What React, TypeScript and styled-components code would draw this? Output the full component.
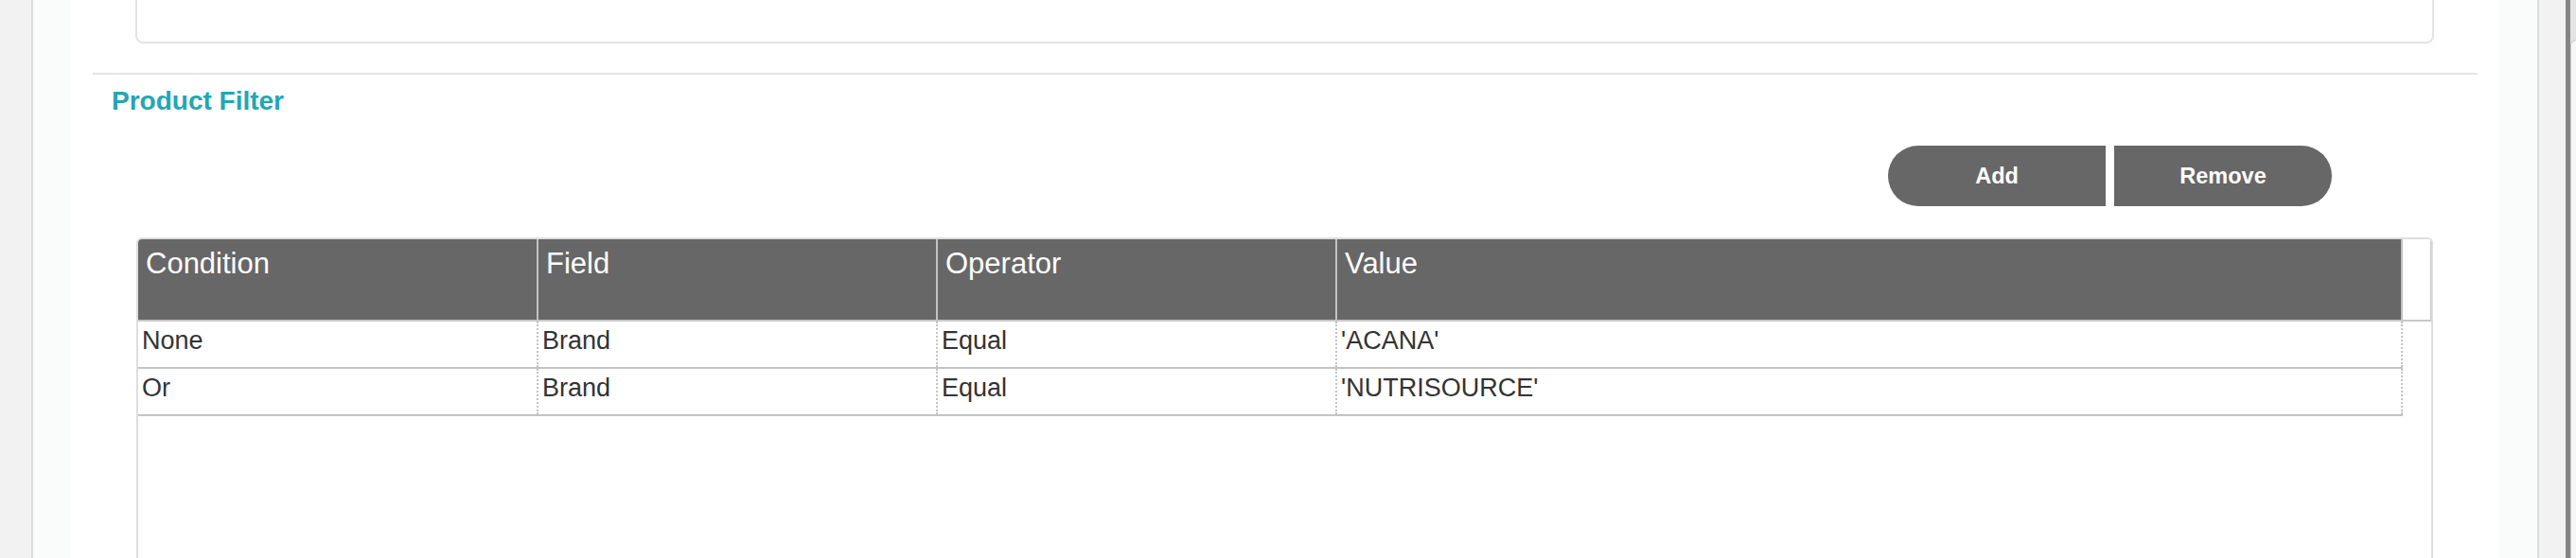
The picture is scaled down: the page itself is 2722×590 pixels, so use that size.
import styled, { createGlobalStyle } from "styled-components";

const GlobalStyle = createGlobalStyle`
  html, body {
    margin: 0;
    padding: 0;
    height: 590px;
    overflow: hidden;
    background: #f2f2f2;
  }
  body {
    font-family: "Liberation Sans", Arial, sans-serif;
  }
  #root {
    height: 590px;
  }
`;

type Filter = {
  condition: string;
  field: string;
  operator: string;
  value: string;
};

const columns = ["Condition", "Field", "Operator", "Value"];

const filters: Filter[] = [
  { condition: "None", field: "Brand", operator: "Equal", value: "'ACANA'" },
  { condition: "Or", field: "Brand", operator: "Equal", value: "'NUTRISOURCE'" },
];

const COLS = "423px 422px 422px 1fr";

const Screen = styled.div`
  display: flex;
  height: 590px;
  overflow: hidden;
`;

const Gutter = styled.div<{ $w: number }>`
  flex: 0 0 ${({ $w }) => $w}px;
  background: #f2f2f2;
`;

const WindowEdge = styled.div`
  flex: 0 0 5px;
  background: #858585;
`;

const NextWindow = styled.div`
  flex: 1;
  background: #e4e4e4;
  display: flex;
  flex-direction: column;
`;

const NextWindowBody = styled.div`
  margin-top: 42px;
  flex: 1;
  background: #f7f7f7;
  border-top-left-radius: 8px;
  border-left: 1px solid #c9c9c9;
  border-top: 1px solid #c9c9c9;
`;

const Page = styled.main`
  flex: 0 0 2650px;
  box-sizing: border-box;
  border-left: 2px solid #dcdcdc;
  border-right: 2px solid #dcdcdc;
  background: linear-gradient(
    to right,
    #fafbfb 0 40px,
    #ffffff 40px calc(100% - 40px),
    #fafbfb calc(100% - 40px)
  );
  display: flex;
  flex-direction: column;
  overflow: hidden;
`;

const PrevCard = styled.div`
  flex: 0 0 46px;
  margin: 0 109px 0 108px;
  box-sizing: border-box;
  border: 2px solid #e4e4e4;
  border-top: none;
  border-radius: 0 0 8px 8px;
  background: #fff;
`;

const Divider = styled.hr`
  margin: 31px 63px 0;
  height: 2px;
  border: none;
  background: #e5e5e5;
  flex: 0 0 2px;
`;

const SectionTitle = styled.h3`
  margin: 12px 0 0 83px;
  font-size: 28px;
  line-height: 32px;
  font-weight: bold;
  color: #22a6b5;
`;

const FilterSection = styled.section`
  padding: 0 110px 0 109px;
  display: flex;
  flex-direction: column;
`;

const ButtonRow = styled.div`
  display: flex;
  justify-content: flex-end;
  gap: 9px;
  margin-top: 31px;
  padding-right: 107px;
`;

const ActionButton = styled.button<{ $side: "left" | "right" }>`
  width: 230px;
  height: 64px;
  border: none;
  background: #676767;
  color: #fff;
  font-family: "Liberation Sans", Arial, sans-serif;
  font-size: 23.5px;
  font-weight: bold;
  cursor: pointer;
  border-radius: ${({ $side }) => ($side === "left" ? "32px 0 0 32px" : "0 32px 32px 0")};
`;

const Grid = styled.div`
  margin-top: 33px;
  height: 420px;
  box-sizing: border-box;
  border: 2px solid #dedede;
  border-bottom: none;
  border-radius: 6px 6px 0 0;
  background: #fff;
  overflow: hidden;
`;

const HeaderRow = styled.div`
  display: grid;
  grid-template-columns: ${COLS} 30px;
`;

const HeaderCell = styled.div`
  height: 87px;
  box-sizing: border-box;
  padding: 8px 8px 0;
  background: #676767;
  color: #fff;
  font-size: 31px;
  border-right: 2px solid #c2c2c2;
  border-bottom: 2px solid #c8c8c8;
  white-space: nowrap;
  overflow: hidden;
`;

const HeaderFiller = styled.div`
  height: 87px;
  box-sizing: border-box;
  background: #fff;
  border-right: 1px solid #c6c6c6;
  border-bottom: 2px solid #c8c8c8;
`;

const BodyRow = styled.div`
  display: grid;
  grid-template-columns: ${COLS};
  width: calc(100% - 30px);
  height: 50px;
  box-sizing: border-box;
  border-bottom: 2px solid #c4c4c4;
`;

const BodyCell = styled.div`
  padding: 5px 4px 0;
  font-size: 27px;
  color: #333;
  border-right: 2px dotted #c4c4c4;
  white-space: nowrap;
  overflow: hidden;
`;

export default function App() {
  return (
    <>
      <GlobalStyle />
      <Screen>
        <Gutter $w={33} />
        <Page>
          <PrevCard />
          <Divider />
          <SectionTitle>Product Filter</SectionTitle>
          <FilterSection>
            <ButtonRow>
              <ActionButton $side="left">Add</ActionButton>
              <ActionButton $side="right">Remove</ActionButton>
            </ButtonRow>
            <Grid>
              <HeaderRow>
                {columns.map((c) => (
                  <HeaderCell key={c}>{c}</HeaderCell>
                ))}
                <HeaderFiller />
              </HeaderRow>
              {filters.map((f, i) => (
                <BodyRow key={i}>
                  <BodyCell>{f.condition}</BodyCell>
                  <BodyCell>{f.field}</BodyCell>
                  <BodyCell>{f.operator}</BodyCell>
                  <BodyCell>{f.value}</BodyCell>
                </BodyRow>
              ))}
            </Grid>
          </FilterSection>
        </Page>
        <Gutter $w={28} />
        <WindowEdge />
        <NextWindow>
          <NextWindowBody />
        </NextWindow>
      </Screen>
    </>
  );
}
